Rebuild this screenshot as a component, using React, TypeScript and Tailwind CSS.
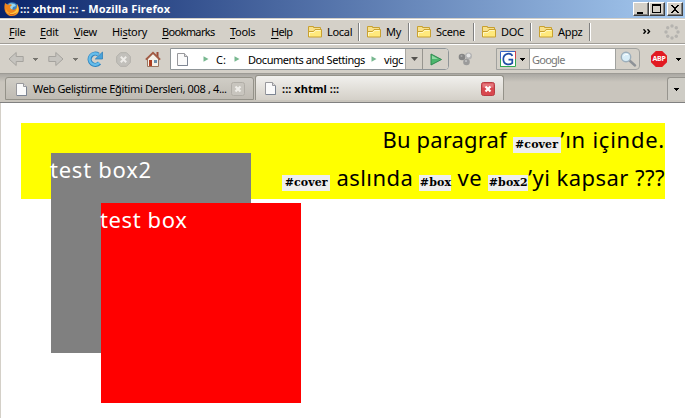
import type { ReactNode } from "react";

function Page() {
  return (
    <svg className="relative top-px block h-4 w-[13px] shrink-0" viewBox="0 0 13 16">
      <path d="M1.500 1.500h7l3 3v9h-10z" fill="#fafafa" stroke="#98989c" />
      <path d="M8.500 1.500v3h3" fill="#ddd" stroke="#98989c" />
      <path d="M11.500 5v8.500H2" fill="none" stroke="#7d8593" />
    </svg>
  );
}

function Folder() {
  return (
    <svg className="block h-[13px] w-4 shrink-0" viewBox="0 0 16 13">
      <path d="M1.500 11V1.500h5v1h7V5" fill="#f8e08a" stroke="#c8a030" />
      <path d="M1.500 12V6.500h5l1.500-2h6.500V12z" fill="#ffe97c" stroke="#c8a030" />
      <path d="M2.500 11V7.500h4.500l1.500-2h5" fill="none" stroke="#fff8c4" />
    </svg>
  );
}

function Caret({ c = "#000" }: { c?: string }) {
  return (
    <svg className="block h-[3px] w-[5px] shrink-0" viewBox="0 0 5 3" shapeRendering="crispEdges">
      <path d="M0 0h5v1H4v1H3v1H2V2H1V1H0z" fill={c} />
    </svg>
  );
}

function Crumb() {
  return (
    <svg className="block h-[6px] w-[6px] shrink-0" viewBox="0 0 6 6">
      <path d="M.5.3 5.500 3 .5 5.700z" fill="#78b890" />
    </svg>
  );
}

function Arrow({ flip }: { flip?: boolean }) {
  return (
    <svg className={flip ? "block h-4 w-4 shrink-0 -scale-x-100" : "block h-4 w-4 shrink-0"} viewBox="0 0 16 16">
      <path d="M.8 5.500h7V1.500L15 8l-7.200 6.500v-4H.8z" fill="#c6c4bf" stroke="#a5a39e" />
    </svg>
  );
}

function Close({ red }: { red?: boolean }) {
  return (
    <svg className="block h-[14px] w-[14px] shrink-0" viewBox="0 0 14 14">
      <rect x=".5" y=".5" width="13" height="13" rx="2" fill={red ? "#d8484f" : "#c8c5be"} stroke={red ? "#b83c44" : "#b0ada6"} />
      {red && <path d="M1.500 1.500h11v4h-11z" fill="#e4777c" />}
      <path d="m4.500 4.500 5 5m0-5-5 5" stroke={red ? "#fff" : "#efede9"} strokeWidth="2.2" />
    </svg>
  );
}

function Menu({ k, pre = "", rest, w }: { k: string; pre?: string; rest: string; w: string }) {
  return (
    <span className={`${w} shrink-0`}>
      {pre}
      <span className="underline underline-offset-2">{k}</span>
      {rest}
    </span>
  );
}

function Bookmark({ w, children }: { w: string; children: string }) {
  return (
    <span className={`${w} flex h-[18px] shrink-0 items-center border-r border-[#808080] shadow-[1px_0_0_#fff]`}>
      <Folder />
      <span className="ml-1 pt-px">{children}</span>
    </span>
  );
}

function WinButton({ children }: { children: ReactNode }) {
  return (
    <span className="flex h-[14px] w-4 items-center justify-center border border-t-white border-l-white border-r-[#404040] border-b-[#404040] bg-[#d4d0c8] shadow-[inset_-1px_-1px_0_#808080]">
      <svg className="h-3 w-3 shrink-0" viewBox="0 0 12 12" shapeRendering="crispEdges">{children}</svg>
    </span>
  );
}

function Code({ w, children }: { w: string; children: string }) {
  return (
    <code className={`${w} inline-block h-4 bg-[#eee] text-center align-baseline font-['DejaVu_Serif',serif] text-[11px] leading-4 font-bold tracking-[0.1px] whitespace-nowrap`}>
      {children}
    </code>
  );
}

export default function App() {
  return (
    <div className="flex h-[418px] w-[685px] flex-col overflow-hidden bg-[#d4d0c8] font-['Noto_Sans',sans-serif] text-[11px] leading-[14px] tracking-[-0.3px] whitespace-nowrap text-black">
      <header className="flex h-[18px] shrink-0 items-center bg-[linear-gradient(90deg,#0a246a_0%,#a6caf0_100%)] pr-[2px] pl-1">
        <svg className="block h-4 w-4 shrink-0" viewBox="0 0 16 16">
          <circle cx="8" cy="8" r="6.800" fill="#3d80c0" />
          <path d="M5 3c3-1 6-.5 7 2l-3 1-1 3-4-3z" fill="#96d7ef" />
          <path d="M1 2 4 4c1-1 3-1 4 0L6 6l1 2 3 1 3-2V3c4 5 2 12-5 12C2 15-1 9 1 2z" fill="#ef851c" />
          <path d="M2 8c1 4 5 5 8 3 2-1 3-3 3-7 3 5 1 10-5 10-4 0-6-3-6-6z" fill="#ffc43c" />
          <path d="M3 10c2 4 7 4 10 1-1 3-8 5-10-1z" fill="#cf4917" />
        </svg>
        <span className="w-[300px] text-[11px] font-bold tracking-[0.15px] text-white">::: xhtml ::: - Mozilla Firefox</span>
        <span className="ml-auto flex">
          <WinButton><path d="M2 9h6v2H2z" /></WinButton>
          <WinButton><path d="M1 1h9v9H1zm1 2v6h7V3z" fillRule="evenodd" /></WinButton>
          <span className="w-[2px]" />
          <WinButton><path d="M2 2h2v1h1v1h2V3h1V2h2v1H9v1H8v1H7v2h1v1h1v1h1v1H8V9H7V8H5v1H4v1H2V9h1V8h1V7h1V5H4V4H3V3H2z" /></WinButton>
        </span>
      </header>

      <nav className="mt-px flex h-[25px] shrink-0 items-center border-t border-b border-t-white border-b-[#a09d97] pl-[9px]">
        <Menu k="F" rest="ile" w="w-[31px]" />
        <Menu k="E" rest="dit" w="w-[34px]" />
        <Menu k="V" rest="iew" w="w-[38px]" />
        <Menu pre="Hi" k="s" rest="tory" w="w-[50px]" />
        <Menu k="B" rest="ookmarks" w="w-[68px] tracking-[-0.65px]" />
        <Menu k="T" rest="ools" w="w-[41px]" />
        <Menu k="H" rest="elp" w="w-9 tracking-[-0.65px]" />
        <Bookmark w="w-[52px]">Local</Bookmark>
        <span className="w-[7px]" />
        <Bookmark w="w-[43px]">My</Bookmark>
        <span className="w-[7px]" />
        <Bookmark w="w-[58px]">Scene</Bookmark>
        <span className="w-[7px]" />
        <Bookmark w="w-[50px]">DOC</Bookmark>
        <span className="w-[7px]" />
        <Bookmark w="w-[52px]">Appz</Bookmark>
        <svg className="ml-[53px] block h-[5px] w-2" viewBox="0 0 8 5">
          <path d="m.5.2 2 2.300-2 2.300M4.500.2l2 2.300-2 2.300" fill="none" stroke="#000" strokeWidth="1.400" />
        </svg>
        <svg className="ml-[13px] block h-4 w-4" viewBox="0 0 16 16" fill="#b5b3af">
          <circle cx="8" cy="2" r="1.700" /><circle cx="12.300" cy="3.700" r="1.700" /><circle cx="14" cy="8" r="1.700" /><circle cx="12.300" cy="12.300" r="1.700" />
          <circle cx="8" cy="14" r="1.700" /><circle cx="3.700" cy="12.300" r="1.700" /><circle cx="2" cy="8" r="1.700" /><circle cx="3.700" cy="3.700" r="1.700" />
        </svg>
      </nav>

      <div className="flex h-[30px] shrink-0 items-center border-t border-b border-t-white border-b-[#9d9b95] pl-2">
        <Arrow flip />
        <span className="w-[9px]" />
        <Caret c="#77756f" />
        <span className="w-[10px]" />
        <Arrow />
        <span className="w-[9px]" />
        <Caret c="#77756f" />
        <svg className="ml-[9px] block h-4 w-4 shrink-0" viewBox="0 0 16 16">
          <path d="M12.500 12A5.600 5.600 0 1 1 11.500 3.700" fill="none" stroke="#2e83bd" strokeWidth="4.200" />
          <path d="M12.300 11.800A5.600 5.600 0 1 1 11.500 3.700" fill="none" stroke="#66bdeb" strokeWidth="2.400" />
          <path d="M15.500 1v7H8.300z" fill="#49a2da" stroke="#257bb6" strokeWidth=".7" />
        </svg>
        <svg className="ml-[13px] block h-[15px] w-[15px] shrink-0" viewBox="0 0 15 15">
          <path d="M4.500.7h6l3.800 3.800v6l-3.800 3.800h-6L.7 10.500v-6z" fill="#c2c0bb" stroke="#b2b0ab" />
          <path d="m4.800 4.800 5.400 5.400m0-5.400-5.400 5.400" stroke="#eeece8" strokeWidth="2" />
        </svg>
        <svg className="ml-[14px] block h-[17px] w-4 shrink-0" viewBox="0 0 16 17">
          <path d="M2.500 8v7.500h11V8L8 2.500z" fill="#f5f1e9" stroke="#9b7661" />
          <path d="M11.500 1h2v5h-2z" fill="#9c4b36" />
          <path d="m.8 8.700 7.200-7 7.200 7" fill="none" stroke="#a35a43" strokeWidth="1.700" />
          <path d="M4 9h3v6H4z" fill="#ad3f23" /><path d="M9 9h3v3H9z" fill="#6c8faa" />
        </svg>

        <div className="ml-[9px] flex h-[22px] w-[279px] shrink-0 items-center rounded-r-[4px] border border-[#8f9598] bg-white text-[11px]">
          <span className="w-[5px]" /><Page />
          <span className="w-[14px]" /><Crumb />
          <span className="ml-[7px] w-[18px] pt-px tracking-normal">C:</span><Crumb />
          <span className="ml-2 w-[123px] pt-px tracking-[-0.44px]">Documents and Settings</span><Crumb />
          <span className="ml-[7px] w-[18px] pt-px tracking-[-0.4px]">vigc</span>
          <span className="ml-auto flex h-5 w-[17px] items-center justify-center border-l border-[#aaa8a2] bg-[#d4d0c8]">
            <svg className="block h-1 w-[7px]" viewBox="0 0 7 4"><path d="M0 0h7L3.500 4z" fill="#55534f" /></svg>
          </span>
          <span className="flex h-5 w-[26px] items-center justify-center rounded-r-[3px] border-l border-[#97958f] bg-[#d4d0c8]">
            <svg className="block h-[13px] w-3" viewBox="0 0 12 13"><path d="M1 1v11l10.500-5.500z" fill="#4cb66d" stroke="#2f8a50" /><path d="M2 2.500v3.500h6z" fill="#91d8a4" /></svg>
          </span>
        </div>
        <svg className="ml-[9px] block h-[14px] w-[15px] shrink-0" viewBox="0 0 15 14">
          <circle cx="4" cy="5" r="3.300" fill="#858585" /><circle cx="10.500" cy="4" r="3.500" fill="#b4b4b4" /><circle cx="8.500" cy="10" r="3.300" fill="#9b9b9b" />
          <circle cx="3.500" cy="4" r="1" fill="#aaa" /><circle cx="10.500" cy="3.500" r="2" fill="#e4e4e4" /><circle cx="8" cy="9" r="1" fill="#c4c4c4" />
        </svg>
        <div className="ml-[23px] flex h-[22px] w-[144px] shrink-0 items-center rounded-r-[4px] border border-[#a1a29f]">
          <svg className="ml-[3px] block h-4 w-4" viewBox="0 0 16 16">
            <path d="M0 0h16v16H0z" fill="#fff" /><path d="M.5 16V.5H16" fill="none" stroke="#3866c5" /><path d="M15.500 0v8" stroke="#d3434b" /><path d="M15.500 8v7.500H0" fill="none" stroke="#33a853" /><path d="M.5 8v8" stroke="#33a853" />
            <path d="M12.300 5C11 1.500 3.500 1.700 3.300 8c0 6 6 6.500 9 4V8.700H8.500" fill="none" stroke="#214fa7" strokeWidth="1.700" />
          </svg>
          <span className="w-1" /><Caret />
          <span className="ml-1 flex h-5 w-[87px] items-center border-x border-[#a1a29f] bg-white pl-[2px] text-[#777]"><span className="pt-px tracking-[-0.75px]">Google</span></span>
          <svg className="ml-1 block h-4 w-[17px]" viewBox="0 0 17 16"><path d="m9.500 9.500 5.500 5" stroke="#8e9297" strokeWidth="2.400" strokeLinecap="round" /><circle cx="6" cy="6" r="4.700" fill="#d8edf8" stroke="#9caebb" strokeWidth="1.400" /><path d="M3.500 5Q5 2.500 8 3.500" stroke="#fff" fill="none" /></svg>
        </div>
        <span className="ml-[11px] flex h-4 w-4 shrink-0 items-center justify-center bg-[#e21a22] text-[7px] font-bold tracking-[-0.3px] text-white [clip-path:polygon(30%_0,70%_0,100%_30%,100%_70%,70%_100%,30%_100%,0_70%,0_30%)]">ABP</span>
        <span className="w-[9px]" /><Caret />
      </div>

      <div className="flex h-[29px] shrink-0 items-end border-b border-[#808080] bg-[linear-gradient(#aaa8a3,#c9c5bd_8px)] pb-[2px]">
        <div className="ml-[5px] flex h-[23px] w-[249px] items-center rounded-t-[3px] border border-[#949289] bg-[linear-gradient(#d0cdc6,#bfbbb3)] pr-2 pl-[9px]">
          <Page />
          <span className="ml-[5px] tracking-[-0.36px]">Web Geliştirme Eğitimi Dersleri, 008 , 4...</span>
          <span className="ml-auto"><Close /></span>
        </div>
        <div className="ml-px flex h-[25px] w-[249px] items-center rounded-t-[3px] border border-b-0 border-[#949289] bg-[linear-gradient(#f1f0ed,#d4d0c8)] pr-2 pl-[8px]">
          <Page />
          <span className="ml-[5px] pt-px font-bold tracking-[0.05px]">::: xhtml :::</span>
          <span className="ml-auto pt-px"><Close red /></span>
        </div>
        <div className="ml-auto flex h-[23px] w-[18px] items-center justify-center rounded-tl-[3px] border-t border-l border-[#96948e] bg-[#ceccc5]"><Caret /></div>
      </div>

      <main className="relative h-[315px] border-l border-[#d4d0c8] bg-white pt-5 pl-5 text-[22px] leading-[32px] tracking-[0.45px]">
        <div className="h-[76px] w-[644px] bg-[#ff0] text-right">
          <div className="h-[38px]"><span className="tracking-[0.15px]">Bu paragraf </span><Code w="w-12">#cover</Code><span className="tracking-[0.75px]">’ın içinde.</span></div>
          <div className="h-[38px]"><Code w="w-12">#cover</Code> aslında <Code w="w-8">#box</Code> ve <Code w="w-10">#box2</Code>’yi kapsar ???</div>
        </div>
        <div className="absolute top-[50px] left-[50px] h-[200px] w-[200px] bg-[#808080] text-white"><span className="-ml-px tracking-[0.75px]">test box2</span></div>
        <div className="absolute top-[100px] left-[100px] h-[200px] w-[200px] bg-[#f00] text-white"><span className="-ml-px tracking-[0.6px]">test box</span></div>
      </main>
    </div>
  );
}
